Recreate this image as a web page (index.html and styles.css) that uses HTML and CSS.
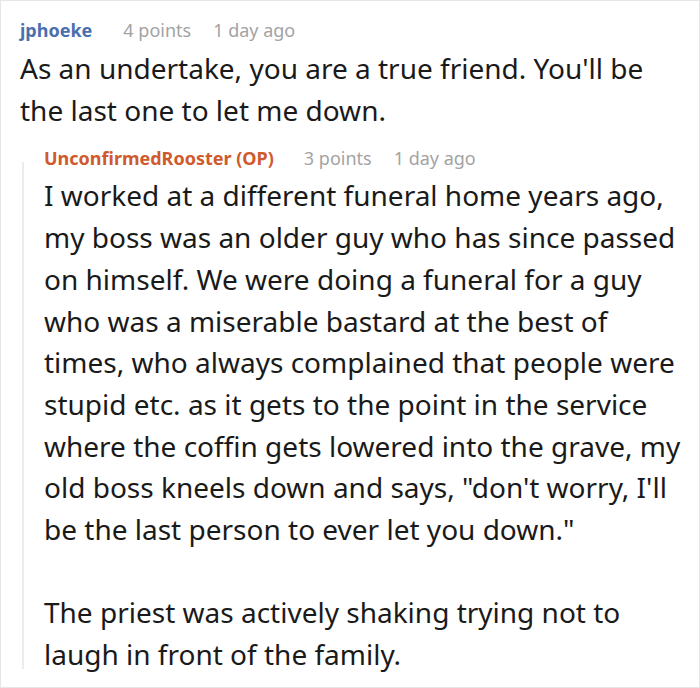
FILE: index.html
```html
<!DOCTYPE html>
<html>
<head>
<meta charset="utf-8">
<link rel="stylesheet" href="styles.css">
</head>
<body>
<div class="frame">
  <div class="comment">
    <div class="meta">
      <span class="author">jphoeke</span>
      <span class="score">4 points</span>
      <span class="time">1 day ago</span>
    </div>
    <div class="body">
      <p>As an undertake, you are a true friend. You'll be the last one to let me down.</p>
    </div>
    <div class="reply">
      <div class="meta">
        <span class="author op">UnconfirmedRooster (OP)</span>
        <span class="score">3 points</span>
        <span class="time">1 day ago</span>
      </div>
      <div class="body">
        <p>I worked at a different funeral home years ago, my boss was an older guy who has since passed on himself. We were doing a funeral for a guy who was a miserable bastard at the best of times, who always complained that people were stupid etc. as it gets to the point in the service where the coffin gets lowered into the grave, my old boss kneels down and says, "don't worry, I'll be the last person to ever let you down."</p>
        <p>The priest was actively shaking trying not to laugh in front of the family.</p>
      </div>
    </div>
  </div>
</div>
</body>
</html>
```
FILE: styles.css
```css
html, body {
  margin: 0;
  padding: 0;
  background: #ffffff;
}

.frame {
  box-sizing: border-box;
  width: 700px;
  height: 688px;
  border: 1px solid #e6e6e6;
  overflow: hidden;
  font-family: "Noto Sans", "Open Sans", sans-serif;
  color: #1a1a1a;
}

.comment {
  padding: 16px 12px 0 19px;
}

.meta {
  display: flex;
  align-items: baseline;
  font-size: 18px;
  line-height: 26px;
  color: #a3a3a3;
}

.author {
  font-weight: 700;
  color: #4a6fae;
  margin-right: 31px;
}

.score {
  margin-right: 22px;
}

.author.op {
  color: #cf5a2c;
  margin-right: 30px;
}

.body {
  margin-top: 5px;
  font-size: 28px;
  line-height: 41.7px;
}

.body p {
  margin: 0;
}

.body p + p {
  margin-top: 41.7px;
}

.reply {
  position: relative;
  margin: 14px 0 0 2px;
  padding-left: 22px;
}

.reply .body {
  margin-top: 4px;
}

.reply::before {
  content: "";
  position: absolute;
  left: 0;
  top: 17px;
  bottom: 7px;
  width: 2px;
  background: #ececec;
}
```
